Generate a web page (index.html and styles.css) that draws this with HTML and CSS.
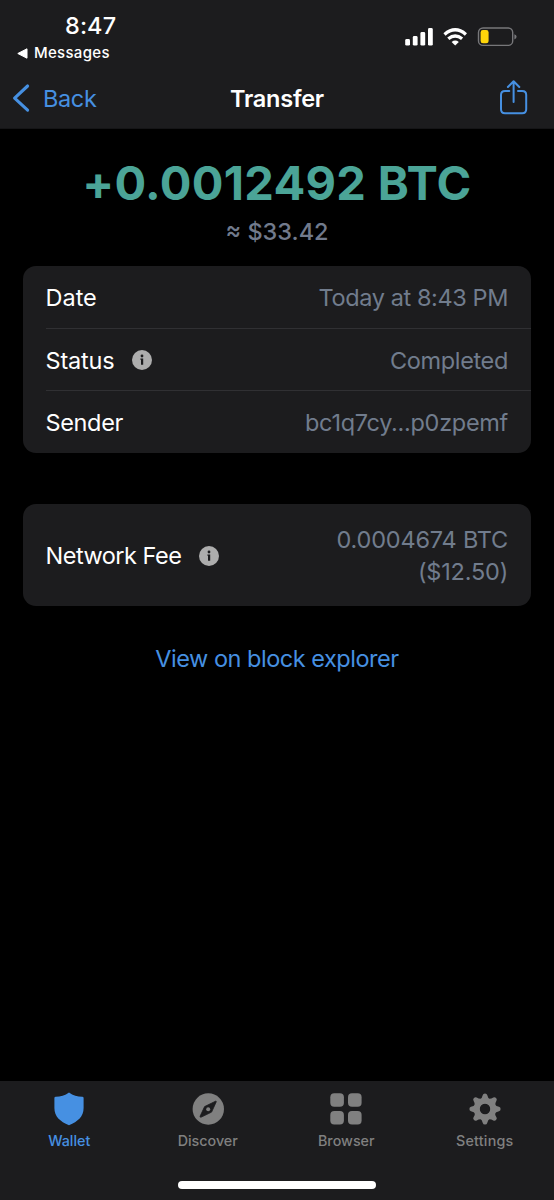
FILE: index.html
```html
<!DOCTYPE html>
<html lang="en">
<head>
<meta charset="utf-8">
<title>Transfer</title>
<link rel="stylesheet" href="styles.css">
</head>
<body>
<div class="screen">
  <header class="top">
    <div class="status">
      <div class="clock-area">
        <div class="clock">8:47</div>
        <div class="return"><svg width="11" height="11" viewBox="0 0 11 11"><path d="M10 .8v9.4L.8 5.500z" fill="#fff" stroke="#fff" stroke-linejoin="round"/></svg><span>Messages</span></div>
      </div>
      <div class="indicators">
        <svg width="114" height="22" viewBox="403 26 114 22">
          <g fill="#fff">
            <rect x="405.2" y="39" width="4.8" height="6.6" rx="1.4"/>
            <rect x="412.8" y="36" width="4.8" height="9.6" rx="1.4"/>
            <rect x="420.4" y="32" width="4.8" height="13.6" rx="1.4"/>
            <rect x="428" y="28" width="4.8" height="17.6" rx="1.4"/>
            <path d="M455.2 45.600l-3.600-3.700q3.600-2.900 7.200 0z"/>
          </g>
          <g fill="none" stroke="#fff" stroke-width="3.300">
            <path d="M444.500 34.400q10.700-9.200 21.400 0"/>
            <path d="M448.300 38.800q6.900-5.700 13.800 0"/>
          </g>
          <rect x="478.500" y="28" width="34.200" height="17.400" rx="4.500" fill="none" stroke="#77777a" stroke-width="1.400"/>
          <path d="M514.400 34.200q2.200.7 2.200 2.600t-2.200 2.600z" fill="#77777a"/>
          <rect x="480.600" y="30.100" width="8" height="13.200" rx="2.400" fill="#ffd60a"/>
        </svg>
      </div>
    </div>
    <nav class="navbar">
      <a class="back"><svg width="18" height="30" viewBox="0 0 18 30"><path d="M15.600 3L2.600 15.200l13 12" fill="none" stroke="#4690e2" stroke-width="3.100" stroke-linecap="round" stroke-linejoin="round"/></svg><span>Back</span></a>
      <h1 class="title">Transfer</h1>
      <a class="share"><svg width="30" height="38" viewBox="0 0 30 38"><path d="M10.300 13H6q-4 0-4 4v14.200q0 4 4 4h17.200q4 0 4-4V17q0-4-4-4H19M14.600 24V3.400M8.900 9l5.700-5.800L20.300 9" fill="none" stroke="#4690e2" stroke-width="2" stroke-linecap="round" stroke-linejoin="round"/></svg></a>
    </nav>
  </header>
  <main class="content">
    <div class="amount">+0.0012492 BTC</div>
    <div class="fiat">≈ $33.42</div>
    <section class="card">
      <div class="row"><span class="label date">Date</span><span class="value v-date">Today at 8:43 PM</span></div>
      <div class="row"><span class="label stat">Status</span><svg class="info" width="20" height="20" viewBox="0 0 20 20"><circle cx="10" cy="10" r="10" fill="#adadad"/><circle cx="10" cy="6" r="1.400" fill="#1c1c1e"/><path d="M8.400 8.500h2.800v6.300H9v-5h-.6z" fill="#1c1c1e"/></svg><span class="value v-stat">Completed</span></div>
      <div class="row"><span class="label send">Sender</span><span class="value v-send">bc1q7cy...p0zpemf</span></div>
    </section>
    <section class="card fee">
      <span class="label net">Network Fee</span><svg class="info" width="20" height="20" viewBox="0 0 20 20"><circle cx="10" cy="10" r="10" fill="#adadad"/><circle cx="10" cy="6" r="1.400" fill="#1c1c1e"/><path d="M8.400 8.500h2.800v6.300H9v-5h-.6z" fill="#1c1c1e"/></svg>
      <span class="value v-fee">0.0004674 BTC<br>($12.50)</span>
    </section>
    <a class="explorer">View on block explorer</a>
  </main>
  <footer class="bottom">
    <div class="tabs">
      <div class="tab active"><svg width="32" height="34" viewBox="0 0 32 34"><path d="M16 .6C20 3.600 24.500 4.700 29.200 4.700q1.400 0 1.400 1.400V16c0 8.500-5.600 13.500-14.600 17.200C7 29.500 1.400 24.500 1.400 16V6.100q0-1.400 1.400-1.400C7.500 4.700 12 3.600 16 .6z" fill="#4690e2"/></svg><span class="wal">Wallet</span></div>
      <div class="tab"><svg width="32" height="34" viewBox="0 0 32 34"><circle cx="16.300" cy="17" r="15.700" fill="#808080"/><path d="M23.600 9.200q.9-.2.600.7l-4.600 10.200-10.300 5q-1.500.5-1.200-.9l4.500-9.600z" fill="#1c1c1e" stroke="#1c1c1e" stroke-width=".8"/><circle cx="16.200" cy="17.200" r="2" fill="#808080"/></svg><span class="dis">Discover</span></div>
      <div class="tab"><svg width="32" height="34" viewBox="0 0 32 34"><g fill="#808080"><rect x=".3" y="1.200" width="13.600" height="13.600" rx="4"/><rect x="18" y="1.200" width="13.600" height="13.600" rx="4"/><rect x=".3" y="19" width="13.600" height="13.600" rx="4"/><rect x="18" y="19" width="13.600" height="13.600" rx="4"/></g></svg><span class="bro">Browser</span></div>
      <div class="tab"><svg width="32" height="34" viewBox="-16 -17 32 34"><defs><path id="tooth" d="M-5.300-9.300Q-2.800-10.800-2.200-14q.3-1.600 2.200-1.600T2.200-14Q2.800-10.800 5.300-9.300L2-5h-4z"/></defs><g fill="#808080"><use href="#tooth"/><use href="#tooth" transform="rotate(45)"/><use href="#tooth" transform="rotate(90)"/><use href="#tooth" transform="rotate(135)"/><use href="#tooth" transform="rotate(180)"/><use href="#tooth" transform="rotate(225)"/><use href="#tooth" transform="rotate(270)"/><use href="#tooth" transform="rotate(315)"/></g><circle r="7.700" fill="none" stroke="#808080" stroke-width="5.600"/><circle r="5.200" fill="#1c1c1e"/></svg><span class="set">Settings</span></div>
    </div>
    <div class="home"></div>
  </footer>
</div>
</body>
</html>
```
FILE: styles.css
```css
* { box-sizing: border-box; }
body { margin: 0; background: #000; color: #fff; font-family: Inter, "Liberation Sans", sans-serif; font-size: 23.5px; }
svg { display: block; flex: none; }
span, .clock { white-space: nowrap; }
.screen { width: 554px; height: 1200px; display: flex; flex-direction: column; overflow: hidden; }
.top { height: 129px; flex: none; background: #1c1c1e; border-bottom: 1px solid #151517; }
.status { height: 68px; display: flex; justify-content: space-between; }
.clock-area { padding: 11px 0 0 17px; }
.clock { padding-left: 48px; line-height: 30px; font-size: 23.5px; font-weight: 500; letter-spacing: .1px; }
.return { display: flex; align-items: center; gap: 6px; padding-top: 2px; font-size: 15px; font-weight: 500; line-height: 20px; letter-spacing: .3px; }
.indicators { padding: 26px 37px 0 0; }
.navbar { height: 60px; display: grid; grid-template-columns: 1fr auto 1fr; align-items: center; color: #4690e2; }
.back { display: flex; align-items: center; gap: 13px; padding-left: 12px; letter-spacing: -.35px; }
.title { margin: 0; padding-top: 1px; color: #fff; font-size: 23.5px; font-weight: 600; line-height: 30px; letter-spacing: -.25px; }
.share { justify-self: end; padding: 0 25px 2px 0; }
.content { flex: 1; display: flex; flex-direction: column; padding: 24px 23px 0; }
.amount { text-align: center; color: #4ba497; font-size: 47px; font-weight: 700; line-height: 60px; white-space: nowrap; letter-spacing: .3px; }
.fiat { text-align: center; color: #717a8c; font-weight: 500; line-height: 30px; margin: 4px 0 19px; }
.card { background: #1c1c1e; border-radius: 13px; padding-left: 22.5px; flex: none; }
.row { height: 62.5px; display: flex; align-items: center; padding-right: 23px; border-bottom: 1px solid #303033; }
.row:last-child { height: 62px; border-bottom: 0; }
.row .label, .row .value { padding-top: 2px; }
.row:last-child .label, .row:last-child .value { padding-top: 0; }
.value { margin-left: auto; color: #717c8d; text-align: right; }
.info { margin: 1px 0 0 18px; }
.stat { letter-spacing: -.2px; }
.send { letter-spacing: -.35px; }
.net { letter-spacing: -.5px; padding-top: 2px; }
.v-date { letter-spacing: -.4px; }
.v-stat { letter-spacing: -.35px; }
.v-send { letter-spacing: -.3px; }
.v-fee { letter-spacing: -.2px; padding-top: 1px; }
.fee { height: 102px; margin-top: 51px; display: flex; align-items: center; padding-right: 23px; line-height: 31.5px; }
.explorer { align-self: center; color: #4690e2; line-height: 30px; margin-top: 38px; letter-spacing: -.48px; }
.bottom { height: 119px; flex: none; background: #1c1c1e; padding-top: 11px; }
.tabs { display: grid; grid-template-columns: repeat(4, 1fr); height: 89px; }
.tab { display: flex; flex-direction: column; align-items: center; color: #808080; font-size: 14.3px; font-weight: 500; line-height: 18px; gap: 6px; }
.active { color: #4690e2; }
.set { letter-spacing: .2px; }
.home { width: 198px; height: 8px; border-radius: 4px; background: #fff; margin: 0 auto; }
```
